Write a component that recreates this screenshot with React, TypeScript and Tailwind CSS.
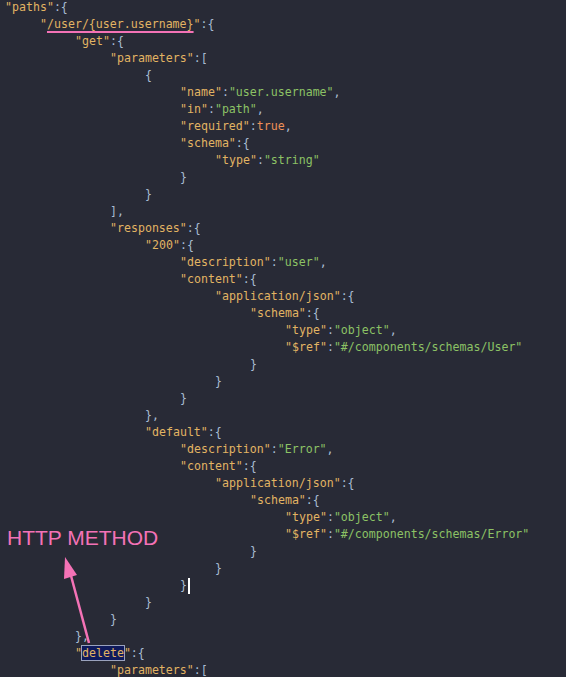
type Kind = 'k' | 's' | 'p' | 'b';
type Tok = [Kind, string];

const indent = [
  'pl-[5px]',
  'pl-[40px]',
  'pl-[75px]',
  'pl-[110px]',
  'pl-[145px]',
  'pl-[180px]',
  'pl-[215px]',
  'pl-[250px]',
  'pl-[285px]',
];

const color: Record<Kind, string> = {
  k: 'text-[#e2b463]',
  s: 'text-[#8cc265]',
  p: 'text-[#a9bdd3]',
  b: 'text-[#ef9159]',
};

const kv = (key: string, val: string, comma = false): Tok[] => [
  ['k', `"${key}"`],
  ['p', ':'],
  ['s', `"${val}"`],
  ...(comma ? ([['p', ',']] as Tok[]) : []),
];
const open = (key: string, br = '{'): Tok[] => [
  ['k', `"${key}"`],
  ['p', ':' + br],
];

const lines: { lvl: number; toks: Tok[]; mark?: 'underline' | 'box' | 'cursor' }[] = [
  { lvl: 0, toks: open('paths') },
  { lvl: 1, toks: open('/user/{user.username}'), mark: 'underline' },
  { lvl: 2, toks: open('get') },
  { lvl: 3, toks: open('parameters', '[') },
  { lvl: 4, toks: [['p', '{']] },
  { lvl: 5, toks: kv('name', 'user.username', true) },
  { lvl: 5, toks: kv('in', 'path', true) },
  { lvl: 5, toks: [['k', '"required"'], ['p', ':'], ['b', 'true'], ['p', ',']] },
  { lvl: 5, toks: open('schema') },
  { lvl: 6, toks: kv('type', 'string') },
  { lvl: 5, toks: [['p', '}']] },
  { lvl: 4, toks: [['p', '}']] },
  { lvl: 3, toks: [['p', '],']] },
  { lvl: 3, toks: open('responses') },
  { lvl: 4, toks: open('200') },
  { lvl: 5, toks: kv('description', 'user', true) },
  { lvl: 5, toks: open('content') },
  { lvl: 6, toks: open('application/json') },
  { lvl: 7, toks: open('schema') },
  { lvl: 8, toks: kv('type', 'object', true) },
  { lvl: 8, toks: kv('$ref', '#/components/schemas/User') },
  { lvl: 7, toks: [['p', '}']] },
  { lvl: 6, toks: [['p', '}']] },
  { lvl: 5, toks: [['p', '}']] },
  { lvl: 4, toks: [['p', '},']] },
  { lvl: 4, toks: open('default') },
  { lvl: 5, toks: kv('description', 'Error', true) },
  { lvl: 5, toks: open('content') },
  { lvl: 6, toks: open('application/json') },
  { lvl: 7, toks: open('schema') },
  { lvl: 8, toks: kv('type', 'object', true) },
  { lvl: 8, toks: kv('$ref', '#/components/schemas/Error') },
  { lvl: 7, toks: [['p', '}']] },
  { lvl: 6, toks: [['p', '}']] },
  { lvl: 5, toks: [['p', '}']], mark: 'cursor' },
  { lvl: 4, toks: [['p', '}']] },
  { lvl: 3, toks: [['p', '}']] },
  { lvl: 2, toks: [['p', '},']] },
  { lvl: 2, toks: open('delete'), mark: 'box' },
  { lvl: 3, toks: open('parameters', '[') },
];

function Token({ t, mark }: { t: Tok; mark?: string }) {
  const [kind, text] = t;
  if (kind === 'k' && (mark === 'underline' || mark === 'box')) {
    const inner = text.slice(1, -1);
    return (
      <span className={color.k}>
        "
        {mark === 'underline' ? (
          <span className="underline decoration-[#f472b6] decoration-2 underline-offset-[3px]">{inner}</span>
        ) : (
          <span className="bg-[#0f1a5c] outline outline-1 outline-[#9aa2bd]">{inner}</span>
        )}
        "
      </span>
    );
  }
  return <span className={color[kind]}>{text}</span>;
}

export default function App() {
  return (
    <div className="relative h-[677px] w-full overflow-hidden bg-[#282a36]">
      <div className="-mt-[1px] font-['DejaVu_Sans_Mono',monospace] text-[11.6px] leading-[17px] whitespace-pre">
        {lines.map((l, i) => (
          <div key={i} className={`${indent[l.lvl]} flex items-center`}>
            {l.toks.map((t, j) => (
              <Token key={j} t={t} mark={l.mark} />
            ))}
            {l.mark === 'cursor' && <span className="ml-px h-[16px] w-[2px] bg-white" />}
          </div>
        ))}
      </div>

      <div className="absolute left-[7px] top-[525px] font-['Liberation_Sans',Arial,sans-serif] text-[21px] leading-[26px] text-[#f472b6]">
        HTTP METHOD
      </div>

      <svg className="absolute left-0 top-0" width="566" height="677" viewBox="0 0 566 677">
        <line x1="89" y1="643" x2="70" y2="572" stroke="#f472b6" strokeWidth="2.5" />
        <polygon points="65,557 77,575 64,579" fill="#f472b6" />
      </svg>
    </div>
  );
}
